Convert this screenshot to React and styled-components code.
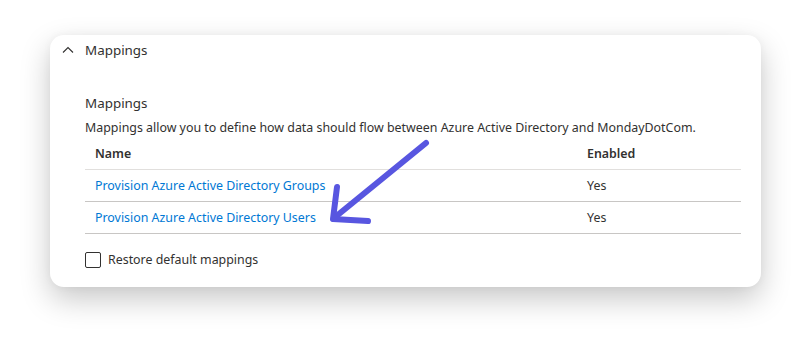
import React from 'react'
import styled, { createGlobalStyle } from 'styled-components'

const GlobalStyle = createGlobalStyle`
  html, body {
    margin: 0;
    background: #ffffff;
  }
  body {
    font-family: 'Noto Sans', 'Open Sans', sans-serif;
    color: #323130;
  }
`

const Page = styled.div`
  width: 811px;
  height: 351px;
  padding: 35px 0 0 50px;
  box-sizing: border-box;
`

const Card = styled.div`
  position: relative;
  width: 711px;
  box-sizing: border-box;
  background: #ffffff;
  border-radius: 14px;
  box-shadow: 0 12px 30px rgba(0, 0, 0, 0.22), 0 0 8px rgba(0, 0, 0, 0.04);
  padding-bottom: 19px;
`

const Header = styled.div`
  height: 30px;
  display: flex;
  align-items: center;
  gap: 11px;
  padding-left: 12px;
  font-size: 13.4px;
`

const Body = styled.div`
  padding: 28px 20px 0 35px;
`

const Title = styled.div`
  font-size: 13.4px;
  line-height: 20px;
  margin-bottom: 4px;
`

const Description = styled.div`
  font-size: 12.4px;
  line-height: 21px;
`

const Table = styled.div`
  display: grid;
  grid-template-columns: 492px 1fr;
`

const Cell = styled.div`
  height: 32px;
  display: flex;
  align-items: center;
  padding-left: 10px;
  box-sizing: border-box;
  font-size: 12.4px;
  font-weight: ${p => (p.$head ? 600 : 400)};
  border-bottom: 1px solid ${p => (p.$head ? '#e1dfdd' : '#c8c6c4')};
`

const Link = styled.a`
  color: #0078d4;
  text-decoration: none;
`

const CheckRow = styled.label`
  display: flex;
  align-items: center;
  gap: 7px;
  margin-top: 17px;
  font-size: 12.4px;
`

const Box = styled.span`
  width: 16px;
  height: 16px;
  box-sizing: border-box;
  border: 1px solid #323130;
  border-radius: 2px;
`

const Arrow = styled.svg`
  position: absolute;
  left: 0;
  top: 0;
  pointer-events: none;
`

const rows = [
  { name: 'Provision Azure Active Directory Groups', enabled: 'Yes' },
  { name: 'Provision Azure Active Directory Users', enabled: 'Yes' },
]

const App = () => (
  <Page>
    <GlobalStyle />
    <Card>
      <Header>
        <svg width="12" height="12" viewBox="0 0 12 12">
          <path d="M1 8.5 L6 3.5 L11 8.5" fill="none" stroke="#323130" strokeWidth="1.1" />
        </svg>
        Mappings
      </Header>
      <Body>
        <Title>Mappings</Title>
        <Description>
          Mappings allow you to define how data should flow between Azure Active Directory and MondayDotCom.
        </Description>
        <Table>
          <Cell $head>Name</Cell>
          <Cell $head>Enabled</Cell>
          {rows.map(r => (
            <React.Fragment key={r.name}>
              <Cell>
                <Link href="#">{r.name}</Link>
              </Cell>
              <Cell>{r.enabled}</Cell>
            </React.Fragment>
          ))}
        </Table>
        <CheckRow>
          <Box />
          Restore default mappings
        </CheckRow>
      </Body>
      <Arrow width="711" height="251" viewBox="0 0 711 251">
        <g fill="none" stroke="#5856e0" strokeWidth="6" strokeLinecap="round" strokeLinejoin="round">
          <path d="M376 108 L284 183" />
          <path d="M287 152 L283 184 L318 186" />
        </g>
      </Arrow>
    </Card>
  </Page>
)

export default App
